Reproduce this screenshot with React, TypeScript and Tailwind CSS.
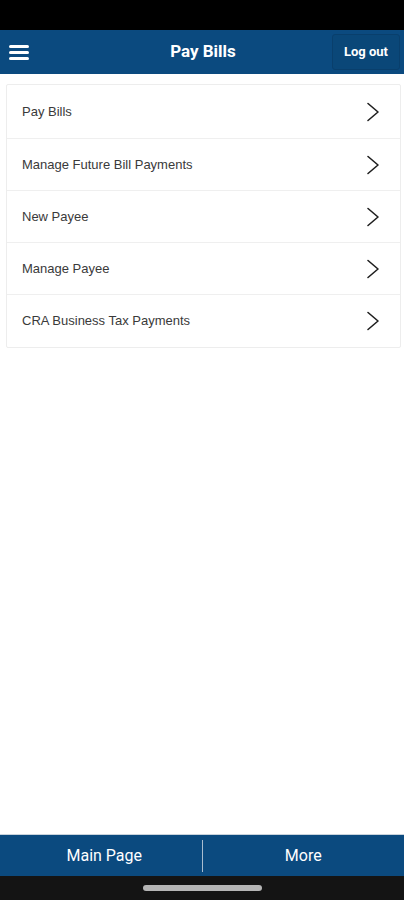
import React from "react";

const items = [
  "Pay Bills",
  "Manage Future Bill Payments",
  "New Payee",
  "Manage Payee",
  "CRA Business Tax Payments",
];

function Chevron() {
  return (
    <svg width="14" height="20" viewBox="0 0 14 20" fill="none">
      <path d="M2 1.5 L12 10 L2 18.5" stroke="#1f1f1f" strokeWidth="1.6" strokeLinecap="round" strokeLinejoin="round" />
    </svg>
  );
}

export default function App() {
  return (
    <div className="w-[404px] h-[900px] flex flex-col bg-white font-['Roboto',sans-serif]">
      {/* Status bar */}
      <div className="h-[30px] bg-black shrink-0" />

      {/* Header */}
      <div className="h-[44px] bg-[#0b4a7f] flex items-center shrink-0">
        <button className="w-[38px] h-full flex flex-col justify-center items-start pl-[9px] gap-[3px]">
          <span className="block w-[20px] h-[3px] bg-white rounded-sm" />
          <span className="block w-[20px] h-[3px] bg-white rounded-sm" />
          <span className="block w-[20px] h-[3px] bg-white rounded-sm" />
        </button>
        <div className="flex-1 text-center text-white font-bold text-[17px] pl-[36px]">Pay Bills</div>
        <button className="mr-[4px] h-[36px] px-[11px] rounded-[3px] border border-[#093f6c] bg-[#0a4778] text-white font-bold text-[13px]">
          Log out
        </button>
      </div>

      {/* List */}
      <div className="flex-1 pl-[6px] pr-[3px] pt-[10px]">
        <div className="border border-[#ededed] rounded-[2px]">
          {items.map((label, i) => (
            <div
              key={label}
              className={`flex items-center justify-between pl-[15px] pr-[20px] ${
                i === 0 || i === items.length - 1 ? "h-[53px]" : "h-[52px]"
              } ${i > 0 ? "border-t border-[#efefef]" : ""}`}
            >
              <span className="text-[13px] text-[#3a3a3a] font-['Liberation_Sans',Arial,sans-serif]">{label}</span>
              <Chevron />
            </div>
          ))}
        </div>
      </div>

      {/* Bottom nav */}
      <div className="h-[42px] bg-[#0b4a7f] flex items-center shrink-0 border-t border-[#c9d3dc]">
        <div className="flex-1 flex justify-center text-white text-[16px]">
          <span className="ml-[7px]">Main Page</span>
        </div>
        <div className="w-px h-[32px] bg-[#a9bdd0]" />
        <div className="flex-1 text-center text-white text-[16px]">More</div>
      </div>

      {/* Nav gesture bar */}
      <div className="h-[24px] bg-[#141414] flex items-center justify-center shrink-0">
        <div className="w-[119px] h-[6px] rounded-full bg-[#b5b5b5]" />
      </div>
    </div>
  );
}
